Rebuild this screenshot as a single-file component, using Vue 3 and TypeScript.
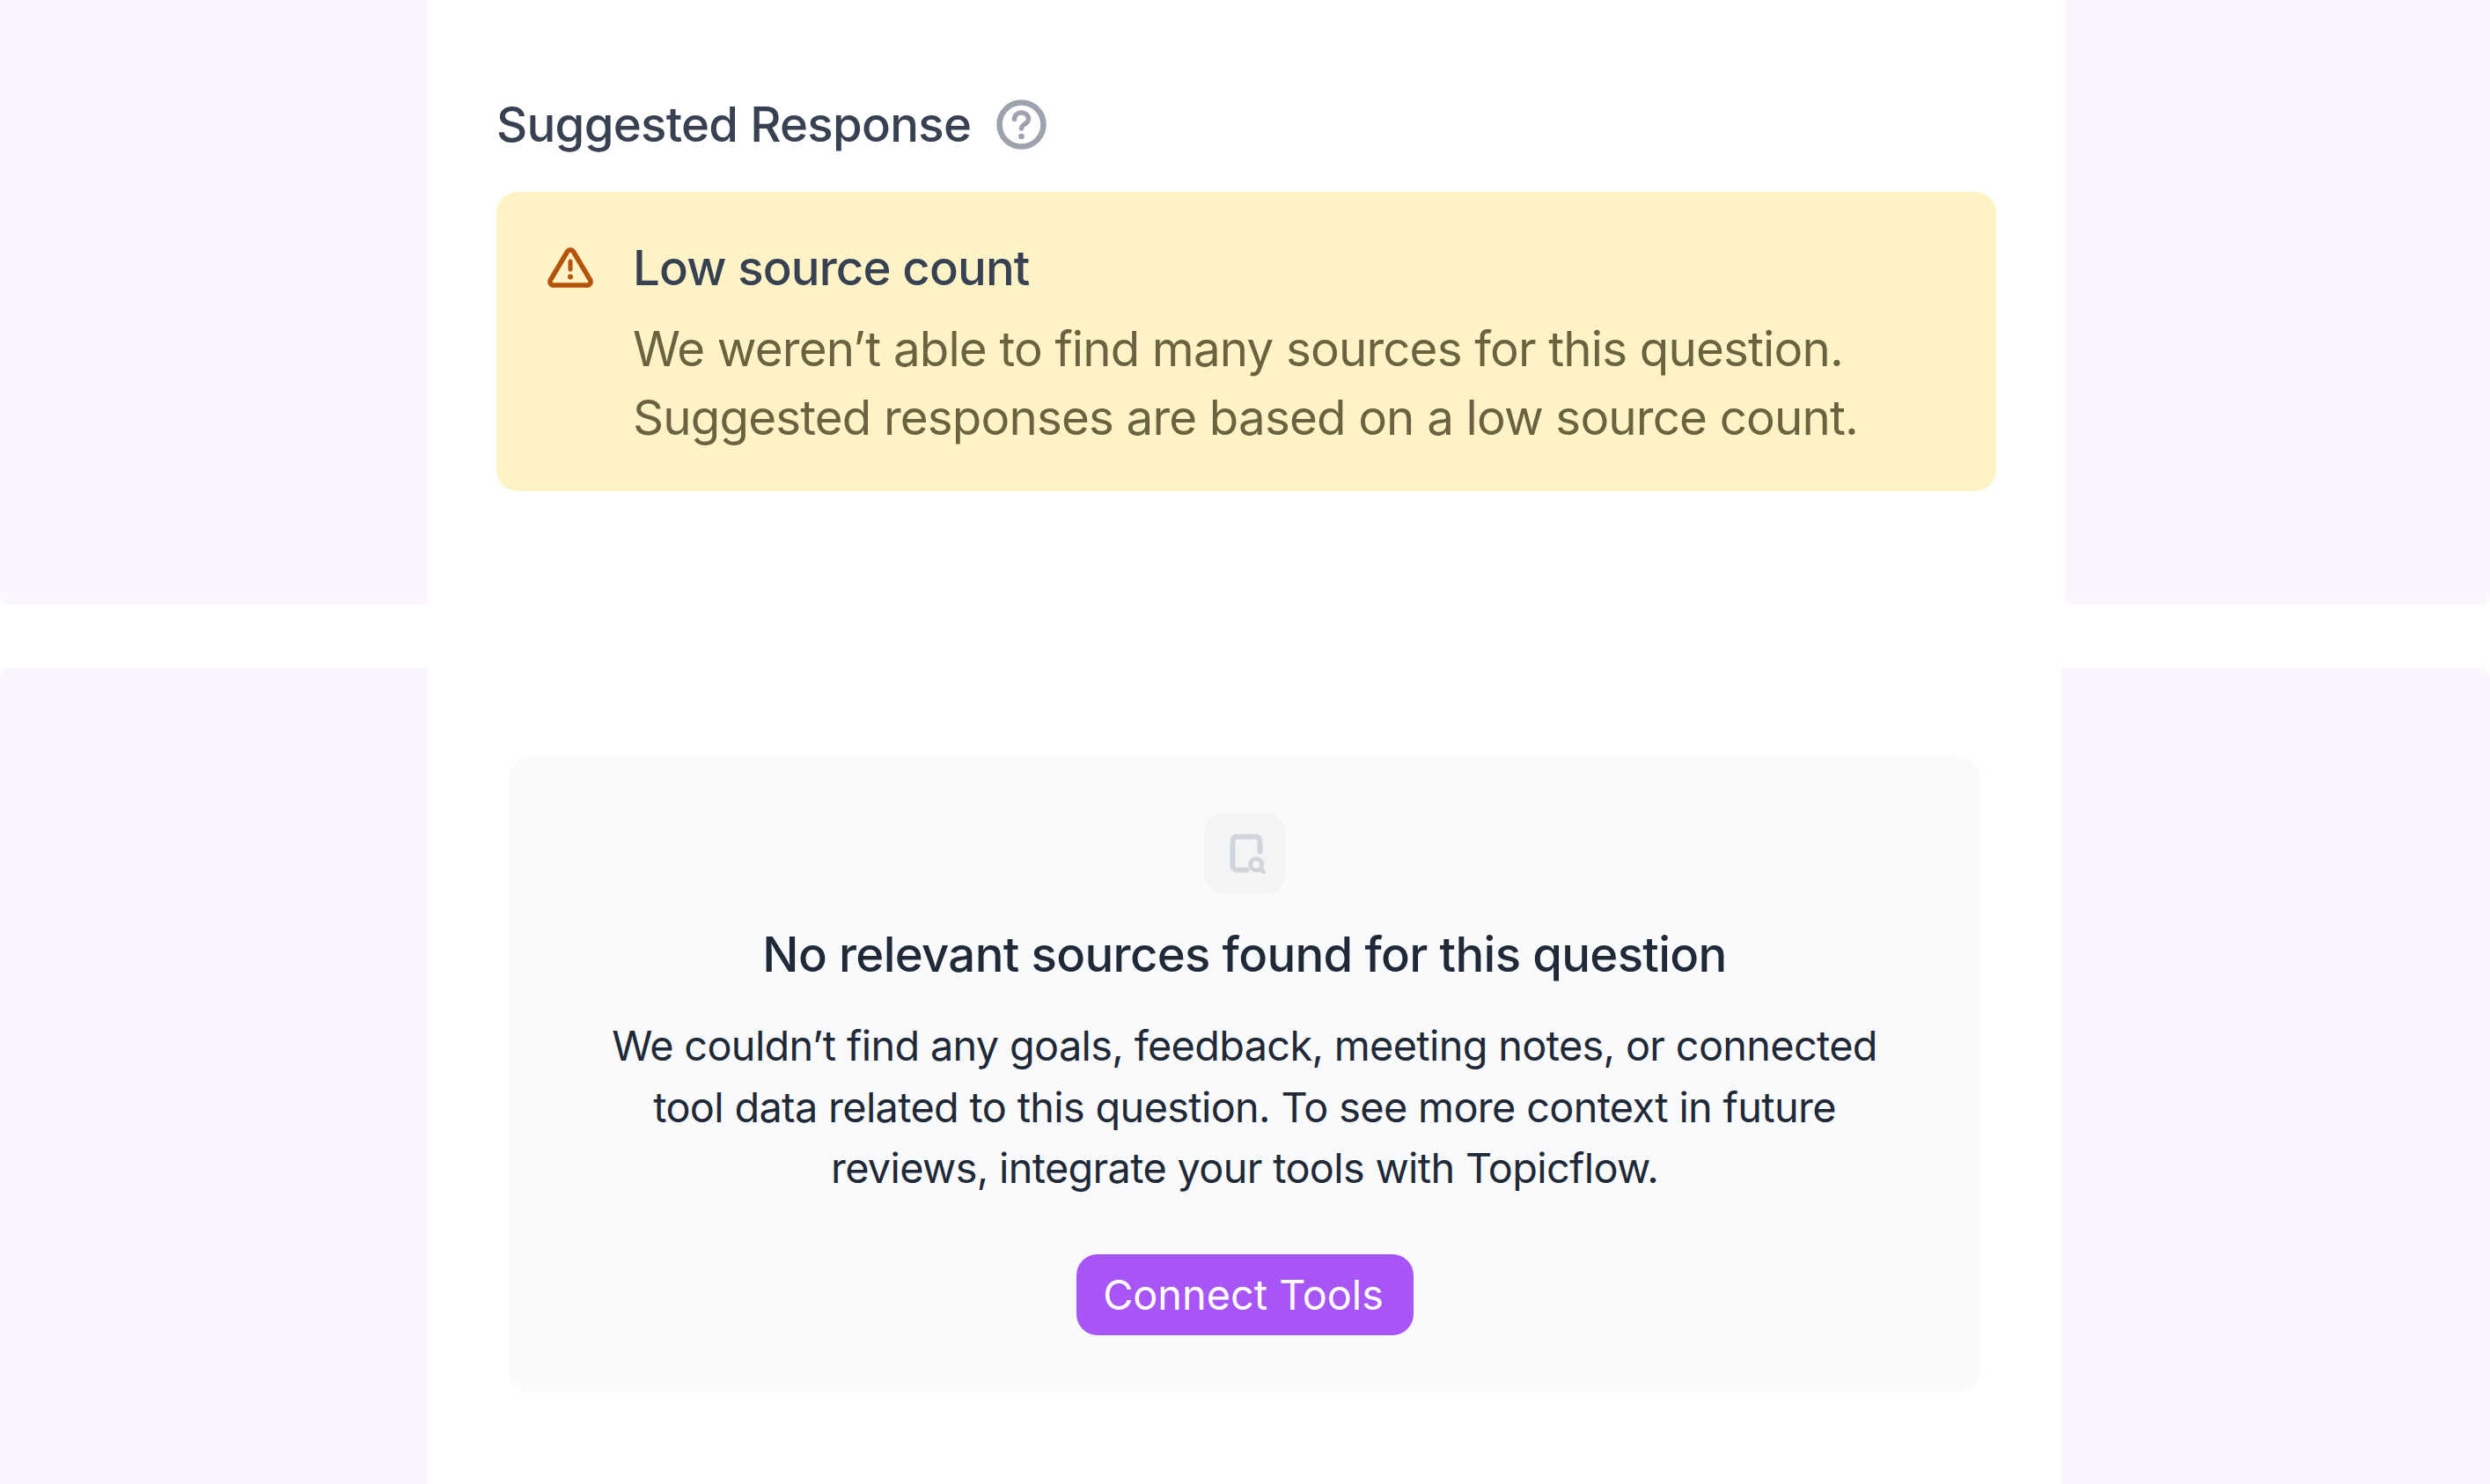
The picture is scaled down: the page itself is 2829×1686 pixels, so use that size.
<template>
  <div class="page">
    <section class="band band--top">
      <div class="side side--left"></div>
      <div class="column column--top">
        <div class="heading">
          <h2>Suggested Response</h2>
          <svg class="help" viewBox="0 0 57 57" fill="none">
            <circle cx="28.5" cy="28.5" r="25" stroke="#9ca3af" stroke-width="6.500" />
            <path d="M20.5 22.5c0-4.5 3.6-7.5 8-7.5s8 3 8 7c0 3.2-1.900 4.600-4.200 6-2.200 1.400-3.800 2.600-3.800 5" stroke="#9ca3af" stroke-width="5.500" stroke-linecap="round" />
            <circle cx="28.500" cy="42" r="3.300" fill="#9ca3af" />
          </svg>
        </div>
        <div class="alert">
          <svg class="alert-icon" viewBox="0 0 52 46" fill="none">
            <path d="M22.500 5 3.500 37a4 4 0 0 0 3.500 6h38a4 4 0 0 0 3.500-6L29.500 5a4 4 0 0 0-7 0Z" stroke="#b45309" stroke-width="5.500" stroke-linejoin="round" />
            <path d="M26 16v9" stroke="#b45309" stroke-width="5" stroke-linecap="round" />
            <circle cx="26" cy="33.500" r="3" fill="#b45309" />
          </svg>
          <div>
            <h3>Low source count</h3>
            <p>We weren’t able to find many sources for this question.<br />Suggested responses are based on a low source count.</p>
          </div>
        </div>
      </div>
      <div class="side side--right"></div>
    </section>

    <section class="band band--bottom">
      <div class="side side--left"></div>
      <div class="column column--bottom">
        <div class="empty">
          <div class="empty-tile">
            <svg viewBox="-9.500 -3.500 56 56" fill="none" stroke="#d1d5db" stroke-linecap="round">
              <path d="M36 22V10a5 5 0 0 0-5-5H10a5 5 0 0 0-5 5v28a5 5 0 0 0 5 5h11" stroke-width="6" />
              <circle cx="31.700" cy="36.700" r="6.500" stroke-width="5" />
              <path d="m37.500 42.500 2.500 2.500" stroke-width="5" />
            </svg>
          </div>
          <h3>No relevant sources found for this question</h3>
          <p>We couldn’t find any goals, feedback, meeting notes, or connected<br />tool data related to this question. To see more context in future<br />reviews, integrate your tools with Topicflow.</p>
          <button type="button" class="connect">Connect Tools</button>
        </div>
      </div>
      <div class="side side--right"></div>
    </section>
  </div>
</template>

<script setup lang="ts">
</script>

<style>
html,
body {
  margin: 0;
  background: #fff;
}
</style>

<style scoped>
.page {
  width: 2829px;
  height: 1686px;
  display: flex;
  flex-direction: column;
  gap: 72px;
  overflow: hidden;
  font-family: Inter, "Liberation Sans", sans-serif;
}

.band {
  display: flex;
}

.band--top {
  height: 687px;
}

.band--bottom {
  height: 927px;
}

.side {
  width: 486px;
  flex: none;
  background: #faf5ff;
}

.band--top .side--left {
  border-bottom-left-radius: 12px;
}

.band--top .side--right {
  width: 483px;
  border-bottom-right-radius: 12px;
}

.band--bottom .side--left {
  border-top-left-radius: 12px;
}

.band--bottom .side--right {
  width: 487px;
  border-top-right-radius: 12px;
}

.column {
  flex: 1;
  min-width: 0;
  background: #fff;
}

.column--top {
  padding: 101px 78px 0;
}

.column--bottom {
  padding: 101px 92px 0;
}

.heading {
  display: flex;
  align-items: center;
  gap: 29px;
  height: 80px;
  margin-bottom: 37px;
}

.heading h2 {
  margin: 0;
  font-size: 54.500px;
  letter-spacing: -0.700px;
  line-height: 80px;
  font-weight: 500;
  color: #374151;
}

.help {
  width: 57px;
  height: 57px;
}

.alert {
  display: flex;
  gap: 45px;
  height: 340px;
  box-sizing: border-box;
  padding: 50px 58px 0;
  background: #fef3c7;
  border-radius: 24px;
}

.alert-icon {
  width: 52px;
  height: 46px;
  flex: none;
  margin-top: 13px;
}

.alert h3 {
  margin: 0 0 18px;
  font-size: 54.500px;
  letter-spacing: -0.850px;
  line-height: 72px;
  font-weight: 500;
  color: #374151;
}

.alert p {
  margin: 0;
  font-size: 54.700px;
  letter-spacing: -0.840px;
  line-height: 77.500px;
  font-weight: 400;
  color: #6b6240;
}

.empty {
  height: 721px;
  box-sizing: border-box;
  padding-top: 63px;
  display: flex;
  flex-direction: column;
  align-items: center;
  background: #f9fafb;
  border-radius: 24px;
  text-align: center;
}

.empty-tile {
  width: 93px;
  height: 93px;
  display: flex;
  align-items: center;
  justify-content: center;
  background: #f3f4f6;
  border-radius: 24px;
}

.empty-tile svg {
  width: 56px;
  height: 56px;
}

.empty h3 {
  margin: 32px 0 0;
  font-size: 54.500px;
  letter-spacing: -0.670px;
  line-height: 72px;
  font-weight: 500;
  color: #1f2937;
}

.empty p {
  margin: 34px 0 0;
  font-size: 46.800px;
  letter-spacing: -0.650px;
  line-height: 69.500px;
  font-weight: 400;
  color: #1f2937;
}

.connect {
  width: 383px;
  height: 92px;
  margin-top: 62px;
  padding: 0 3px 0 0;
  border: 0;
  border-radius: 24px;
  background: #a855f7;
  color: #fff;
  font: 400 46.800px Inter, "Liberation Sans", sans-serif;
}
</style>
